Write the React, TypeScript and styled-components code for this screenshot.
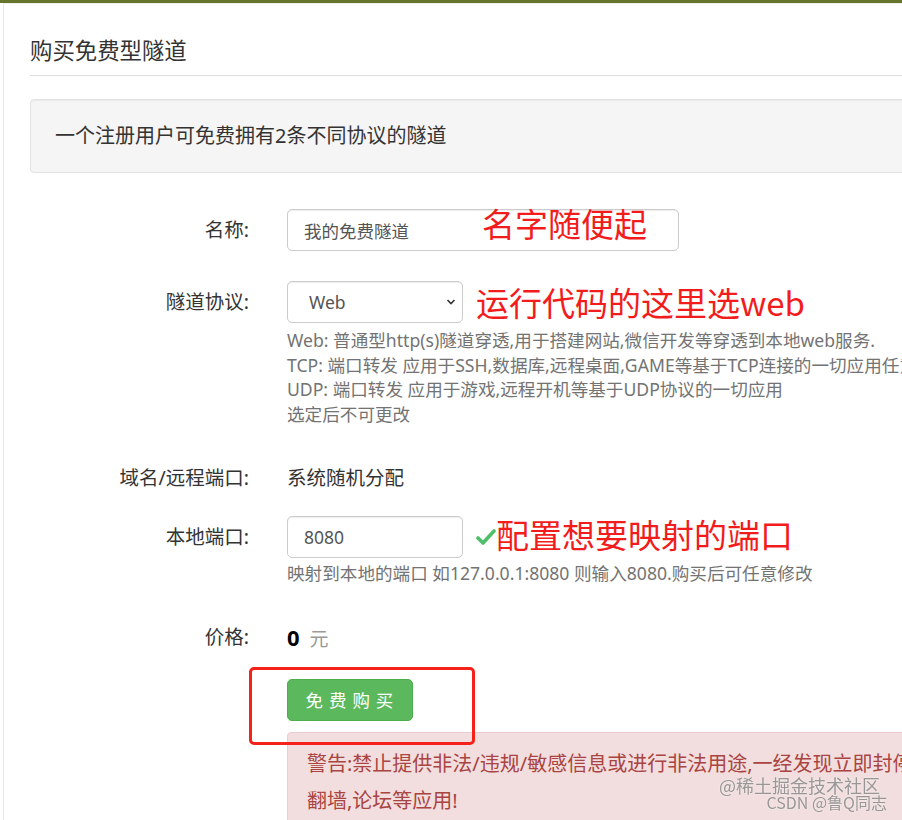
import styled, { createGlobalStyle } from "styled-components";

const GlobalStyle = createGlobalStyle`
  html, body {
    margin: 0;
    padding: 0;
    background: #fff;
    overflow: hidden;
  }
  body {
    font-family: "Noto Sans", "Noto Sans CJK SC", sans-serif;
    color: #333;
  }
  * {
    box-sizing: border-box;
  }
`;

const Page = styled.div`
  width: 1200px;
  min-height: 100vh;
  display: flex;
  flex-direction: column;
`;

const TopBar = styled.div`
  height: 3px;
  background: #66742c;
  flex-shrink: 0;
`;

const Main = styled.main`
  flex: 1;
  margin-left: 3px;
  border-left: 1px solid #e8e8e8;
  border-top: 1px solid #eef0ea;
  padding: 35px 0 0 26px;
`;

const Title = styled.h3`
  margin: 0;
  font-size: 22.4px;
  line-height: 24px;
  font-weight: 400;
  color: #333;
`;

const Rule = styled.hr`
  margin: 12px 0 0;
  border: 0;
  border-top: 1px solid #dedede;
`;

const Well = styled.div`
  margin-top: 23px;
  padding: 22px 24px;
  background: #f5f5f5;
  border: 1px solid #e3e3e3;
  border-radius: 4px;
  box-shadow: inset 0 1px 1px rgba(0, 0, 0, 0.05);
  font-size: 20px;
  line-height: 28px;
`;

const Form = styled.form`
  margin-top: 36px;
  display: flex;
  flex-direction: column;
`;

const Row = styled.div<{ $gap: number }>`
  display: grid;
  grid-template-columns: 219px 1fr;
  column-gap: 38px;
  align-items: start;
  margin-bottom: ${(p) => p.$gap}px;
`;

const Label = styled.label`
  font-size: 19.5px;
  line-height: 42px;
  text-align: right;
  color: #333;
`;

const Control = styled.div`
  display: flex;
  flex-direction: column;
  min-width: 0;
`;

const Line = styled.div`
  display: flex;
  align-items: center;
  position: relative;
  height: 42px;
`;

const TextInput = styled.input<{ $width: number }>`
  width: ${(p) => p.$width}px;
  height: 42px;
  padding: 0 16px;
  font-family: inherit;
  font-size: 17.5px;
  color: #555;
  background: #fff;
  border: 1px solid #ccc;
  border-radius: 5px;
  box-shadow: inset 0 1px 1px rgba(0, 0, 0, 0.075);
  outline: none;
`;

const SelectWrap = styled.div`
  position: relative;
  width: 176px;
  height: 42px;
  svg {
    position: absolute;
    right: 7px;
    top: 17px;
    pointer-events: none;
  }
`;

const Select = styled.select`
  appearance: none;
  width: 100%;
  height: 100%;
  padding: 0 30px 0 21px;
  font-family: inherit;
  font-size: 17.5px;
  color: #555;
  background: #fff;
  border: 1px solid #ccc;
  border-radius: 5px;
  box-shadow: inset 0 1px 1px rgba(0, 0, 0, 0.075);
  outline: none;
`;

const Static = styled.div`
  font-size: 19.5px;
  line-height: 42px;
  color: #333;
`;

const Help = styled.div<{ $top: number }>`
  margin-top: ${(p) => p.$top}px;
  font-size: 17.6px;
  line-height: 24.5px;
  color: #737373;
  white-space: nowrap;
`;

const Note = styled.span<{ $left: number; $top: number }>`
  font-family: "Noto Sans CJK SC", sans-serif;
  font-size: 33px;
  line-height: 36px;
  color: #f21c1c;
  white-space: nowrap;
  margin-left: ${(p) => p.$left}px;
  margin-top: ${(p) => p.$top}px;
`;

const OverNote = styled(Note)`
  position: absolute;
  left: 195px;
  top: -4px;
  margin: 0;
`;

const Price = styled.div`
  display: flex;
  align-items: baseline;
  gap: 10px;
  line-height: 42px;
  b {
    font-size: 22px;
    color: #000;
  }
  span {
    font-size: 19px;
    color: #999;
  }
`;

const ButtonBox = styled.div`
  position: relative;
  display: flex;
  flex-direction: column;
  align-items: flex-start;
`;

const BuyButton = styled.button`
  width: 126px;
  height: 42px;
  font-family: "Noto Sans CJK SC", sans-serif;
  font-size: 17.5px;
  letter-spacing: 1px;
  color: #fff;
  background: #5cb85c;
  border: 1px solid #4cae4c;
  border-radius: 5px;
  cursor: pointer;
  white-space: pre;
`;

const Marker = styled.div`
  position: absolute;
  left: -38px;
  top: -12px;
  width: 226px;
  height: 78px;
  border: 3px solid #f5221b;
  border-radius: 5px;
  pointer-events: none;
`;

const Alert = styled.div`
  align-self: stretch;
  margin-top: 11px;
  padding: 12px 19px 20px;
  background: #f2dede;
  border: 1px solid #ebccd1;
  border-radius: 4px;
  color: #a94442;
  font-size: 20px;
  line-height: 37px;
  white-space: nowrap;
`;

const Watermark = styled.div`
  position: fixed;
  right: 15px;
  bottom: 9px;
  display: flex;
  flex-direction: column;
  align-items: flex-end;
  font-family: "Noto Sans CJK SC", sans-serif;
  color: rgba(120, 120, 120, 0.75);
  text-shadow: 0 0 2px rgba(255, 255, 255, 0.8);
  pointer-events: none;
`;

const MarkTop = styled.span`
  font-size: 18px;
  line-height: 18px;
  margin-right: 7px;
`;

const MarkBottom = styled.span`
  font-size: 16px;
  line-height: 17px;
`;

const Chevron = () => (
  <svg width="10" height="8" viewBox="0 0 10 8">
    <path d="M1.5 2 L5 5.5 L8.5 2" fill="none" stroke="#333" strokeWidth="1.6" />
  </svg>
);

const Check = () => (
  <svg width="20" height="18" viewBox="0 0 20 18" style={{ marginLeft: 13 }}>
    <path
      d="M2 10 L7 15 L18 3"
      fill="none"
      stroke="#4fbf68"
      strokeWidth="3.6"
      strokeLinecap="round"
      strokeLinejoin="round"
    />
  </svg>
);

export default function App() {
  return (
    <Page>
      <GlobalStyle />
      <TopBar />
      <Main>
        <Title>购买免费型隧道</Title>
        <Rule />
        <Well>一个注册用户可免费拥有2条不同协议的隧道</Well>

        <Form onSubmit={(e) => e.preventDefault()}>
          <Row $gap={30}>
            <Label>名称:</Label>
            <Control>
              <Line>
                <TextInput $width={392} defaultValue="我的免费隧道" />
                <OverNote $left={0} $top={0}>名字随便起</OverNote>
              </Line>
            </Control>
          </Row>

          <Row $gap={31}>
            <Label>隧道协议:</Label>
            <Control>
              <Line>
                <SelectWrap>
                  <Select defaultValue="web">
                    <option value="web">Web</option>
                    <option value="tcp">TCP</option>
                    <option value="udp">UDP</option>
                  </Select>
                  <Chevron />
                </SelectWrap>
                <Note $left={13} $top={0}>运行代码的这里选web</Note>
              </Line>
              <Help $top={5}>
                <div>Web: 普通型http(s)隧道穿透,用于搭建网站,微信开发等穿透到本地web服务.</div>
                <div>TCP: 端口转发 应用于SSH,数据库,远程桌面,GAME等基于TCP连接的一切应用任意</div>
                <div>UDP: 端口转发 应用于游戏,远程开机等基于UDP协议的一切应用</div>
                <div>选定后不可更改</div>
              </Help>
            </Control>
          </Row>

          <Row $gap={17}>
            <Label>域名/远程端口:</Label>
            <Static>系统随机分配</Static>
          </Row>

          <Row $gap={30}>
            <Label>本地端口:</Label>
            <Control>
              <Line>
                <TextInput $width={176} defaultValue="8080" />
                <Check />
                <Note $left={0} $top={-6}>配置想要映射的端口</Note>
              </Line>
              <Help $top={3}>
                映射到本地的端口 如127.0.0.1:8080 则输入8080.购买后可任意修改
              </Help>
            </Control>
          </Row>

          <Row $gap={19}>
            <Label>价格:</Label>
            <Price>
              <b>0</b>
              <span>元</span>
            </Price>
          </Row>

          <Row $gap={0}>
            <span />
            <ButtonBox>
              <BuyButton type="submit">免 费 购 买</BuyButton>
              <Marker />
              <Alert>
                警告:禁止提供非法/违规/敏感信息或进行非法用途,一经发现立即封停账号,禁止用于
                <br />
                翻墙,论坛等应用!
              </Alert>
            </ButtonBox>
          </Row>
        </Form>
      </Main>
      <Watermark>
        <MarkTop>@稀土掘金技术社区</MarkTop>
        <MarkBottom>CSDN @鲁Q同志</MarkBottom>
      </Watermark>
    </Page>
  );
}
